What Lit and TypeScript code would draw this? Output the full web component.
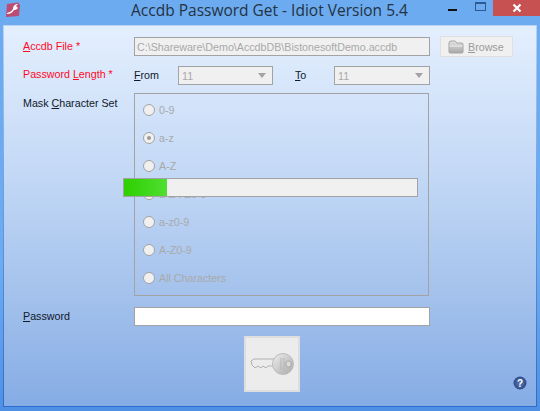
import { LitElement, html, css } from "lit";
import { customElement } from "lit/decorators.js";

const OPTIONS = ["0-9", "a-z", "A-Z", "a-zA-Z0-9", "a-z0-9", "A-Z0-9", "All Characters"];

@customElement("app-root")
export class AppRoot extends LitElement {
  static styles = css`
    :host { display: block; width: 540px; height: 411px; overflow: hidden; font-family: "Liberation Sans", Arial, sans-serif; font-size: 10.7px; color: #10182a; }
    * { box-sizing: border-box; }
    .window { width: 540px; height: 411px; display: flex; flex-direction: column; background-image: linear-gradient(to bottom, #6cabf0 0, #6cabf0 65%, #4f90e4 100%); }
    .titlebar { height: 25px; flex: none; display: flex; position: relative; align-items: flex-start; }
    .appicon { position: absolute; left: 5px; top: 2px; width: 15px; height: 15px; }
    .title { width: 100%; text-align: center; font-family: "Open Sans", sans-serif; font-size: 15.5px; line-height: 21px; color: #243242; padding-right: 1px; }
    .winbtns { position: absolute; right: 0; top: 0; display: flex; align-items: flex-start; }
    .min { width: 9px; height: 2px; background: #111; margin: 9px 18px 0 0; }
    .max { width: 11px; height: 9px; border: 1px solid #2d5a92; border-top-width: 2px; margin: 2px 7px 0 0; }
    .close { width: 47px; height: 16px; background: #c75050; color: #fff; display: flex; align-items: center; justify-content: center; }
    .client { margin: 0 3px 4px 3px; flex: 1; position: relative; background: linear-gradient(to bottom, #e4effe 0, #c4d9f6 38%, #a4c2ec 70%, #86ace5 100%); border: 1px solid; border-image: linear-gradient(to bottom, #b9d3f2, #6ea3e6 40%, #2c6ccf) 1; padding: 11px 0 0 19px; display: flex; flex-direction: column; }
    .row { display: flex; align-items: center; height: 19px; }
    .label { width: 111px; flex: none; position: relative; top: -1px; }
    .lenlabel { top: -2px; }
    .req { color: #ff0a1e; }
    .box { border: 1px solid #a3a3a3; background: #f0f0f0; color: #a9a9a9; height: 19px; padding: 0 2px; display: flex; align-items: center; white-space: nowrap; overflow: hidden; }
    .file { width: 296px; }
    .browse { width: 73px; height: 21px; margin-left: 10px; background: #f0f0f0; border: 1px solid #e0e0e0; color: #9a9a9a; display: flex; align-items: center; gap: 4px; padding-left: 7px; }
    .from { width: 44px; flex: none; position: relative; top: -1px; }
    .to { width: 39px; flex: none; margin-left: 22px; position: relative; top: -1px; }
    .select { justify-content: space-between; padding-left: 3px; }
    .s1 { width: 95px; }
    .s2 { width: 96px; }
    .arrow { width: 0; height: 0; border: 4px solid transparent; border-top: 5px solid #a3a3a3; border-bottom: 0; margin-right: 4px; }
    .mask { align-items: flex-start; height: 203px; margin-top: 8px; }
    .masklabel { padding-top: 5px; }
    .group { width: 295px; height: 203px; border: 1px solid #a3a3a3; padding: 2px 0 0 8px; display: flex; flex-direction: column; }
    .radio { height: 28px; display: flex; align-items: center; gap: 4px; color: #a9a9a9; }
    .dot { width: 12px; height: 12px; border-radius: 50%; border: 1px solid #a3a3a3; background: #f0f0f0; display: flex; align-items: center; justify-content: center; flex: none; }
    .dot i { width: 4px; height: 4px; border-radius: 50%; background: #9a9a9a; }
    .pw { margin-top: 11px; }
    .pwinput { width: 296px; background: #fff; }
    .keywrap { display: flex; justify-content: center; margin-top: 10px; padding-right: 16px; }
    .keybtn { width: 56px; height: 56px; background: #ececec; border: 2px solid #dedede; display: flex; align-items: center; justify-content: center; }
    .progress { position: absolute; left: 119px; top: 152px; width: 295px; height: 19px; border: 1px solid #a3a3a3; background: #f0f0f0; }
    .fill { height: 100%; width: 43px; background: linear-gradient(to right, #2ed000, #50de32); }
    .help { position: absolute; left: 509px; top: 350px; width: 14px; height: 14px; }
    u { text-underline-offset: 1px; }
  `;

  render() {
    return html`<div class="window">
      <div class="titlebar">
        <svg class="appicon" viewBox="0 0 15 15">
          <path d="M2 2 L13 0.5 L15 3 L14 14 L1 15 Z" fill="#bd4b73"/>
          <path d="M2 11 C5 10 7 9 8 7 C8 4 10 2 13 2 L11 4 L13 6 C11 8 10 8 9 8 C7 11 5 12 2 12 Z" fill="#fff"/>
        </svg>
        <div class="title">Accdb Password Get - Idiot Version 5.4</div>
        <div class="winbtns">
          <div class="min"></div>
          <div class="max"></div>
          <div class="close">
            <svg width="10" height="10" viewBox="0 0 10 10"><path d="M1.5 1.5 L8.5 8.5 M8.5 1.5 L1.5 8.5" stroke="#fff" stroke-width="2.2" fill="none"/></svg>
          </div>
        </div>
      </div>
      <div class="client">
        <div class="row">
          <div class="label req"><u>A</u>ccdb File *</div>
          <div class="box file">C:\\Shareware\\Demo\\AccdbDB\\BistonesoftDemo.accdb</div>
          <div class="browse">
            <svg width="16" height="14" viewBox="0 0 16 14">
              <defs><linearGradient id="f" x1="0" y1="0" x2="0" y2="1"><stop offset="0" stop-color="#e2e2e2"/><stop offset="1" stop-color="#a8a8a8"/></linearGradient></defs>
              <path d="M1 3 Q1 1 3 1 L7 1 L9 3 L14 3 Q15 3 15 5 L15 12 Q15 13 14 13 L2 13 Q1 13 1 12 Z" fill="url(#f)" stroke="#a5a5a5"/>
              <path d="M1.5 6 L14.5 6" stroke="#eee"/>
            </svg>
            <span><u>B</u>rowse</span>
          </div>
        </div>
        <div class="row" style="margin-top:10px">
          <div class="label req lenlabel">Password <u>L</u>ength *</div>
          <div class="from"><u>F</u>rom</div>
          <div class="box select s1"><span>11</span><span class="arrow"></span></div>
          <div class="to"><u>T</u>o</div>
          <div class="box select s2"><span>11</span><span class="arrow"></span></div>
        </div>
        <div class="row mask">
          <div class="label masklabel">Mask <u>C</u>haracter Set</div>
          <div class="group">
            ${OPTIONS.map((o, i) => html`<div class="radio"><span class="dot">${i === 1 ? html`<i></i>` : ""}</span><span>${o}</span></div>`)}
          </div>
        </div>
        <div class="row pw">
          <div class="label"><u>P</u>assword</div>
          <div class="box pwinput"></div>
        </div>
        <div class="keywrap">
          <div class="keybtn">
            <svg width="46" height="24" viewBox="0 0 46 24">
              <defs><linearGradient id="k" x1="0" y1="0" x2="1" y2="1"><stop offset="0" stop-color="#eeeeee"/><stop offset="1" stop-color="#a9a9a9"/></linearGradient></defs>
              <path d="M2 9 L5 7 L26 7 L26 14 L19 14 L17 16 L14 14 L12 16 L9 14 L6 16 L3 13 Z" fill="#ececec" stroke="#b0b0b0"/>
              <circle cx="34" cy="12" r="10.5" fill="url(#k)" stroke="#bcbcbc"/>
              <rect x="37" y="9" width="5" height="6" rx="2" fill="#dcdcdc" stroke="#a8a8a8"/>
              <path d="M32 6 L32 18 M35 6 L35 18" stroke="#b5b5b5"/>
            </svg>
          </div>
        </div>
        <div class="progress"><div class="fill"></div></div>
        <svg class="help" viewBox="0 0 14 14">
          <defs><radialGradient id="h"><stop offset="0" stop-color="#5f7cb8"/><stop offset="1" stop-color="#2f4a86"/></radialGradient></defs>
          <circle cx="7" cy="7" r="6.5" fill="url(#h)"/>
          <text x="7" y="10.5" text-anchor="middle" font-size="10" font-weight="700" fill="#fff" font-family="Liberation Sans">?</text>
        </svg>
      </div>
    </div>`;
  }
}
